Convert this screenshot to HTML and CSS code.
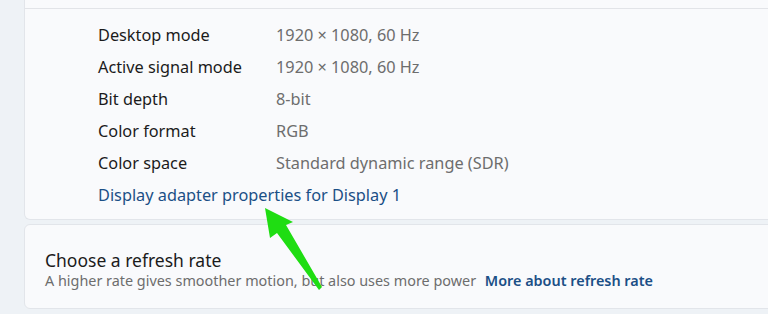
FILE: index.html
```html
<!DOCTYPE html>
<html lang="en">
<head>
    <meta charset="UTF-8">
    <title>Advanced display</title>
    <link rel="stylesheet" href="styles.css">
</head>
<body>
    <div class="page">
        <div class="card info-card">
            <div class="card-top"></div>
            <div class="info-list">
                <div class="info-row">
                    <span class="info-label">Desktop mode</span>
                    <span class="info-value">1920 × 1080, 60 Hz</span>
                </div>
                <div class="info-row">
                    <span class="info-label">Active signal mode</span>
                    <span class="info-value">1920 × 1080, 60 Hz</span>
                </div>
                <div class="info-row">
                    <span class="info-label">Bit depth</span>
                    <span class="info-value">8-bit</span>
                </div>
                <div class="info-row">
                    <span class="info-label">Color format</span>
                    <span class="info-value">RGB</span>
                </div>
                <div class="info-row">
                    <span class="info-label">Color space</span>
                    <span class="info-value">Standard dynamic range (SDR)</span>
                </div>
                <div class="info-row">
                    <a class="adapter-link" href="#">Display adapter properties for Display 1</a>
                </div>
            </div>
        </div>

        <div class="card refresh-card">
            <div class="refresh-title">Choose a refresh rate</div>
            <div class="refresh-desc">
                A higher rate gives smoother motion, but also uses more power
                <a class="more-link" href="#">More about refresh rate</a>
            </div>
        </div>
    </div>

    <!-- annotation arrow -->
    <svg class="arrow" width="80" height="100" viewBox="0 0 80 100">
        <polygon points="5,8 33,22 26,25 62,87 59,90 17,33 10,38" fill="#1fdd12"/>
    </svg>
</body>
</html>
```

FILE: styles.css
```css
/* Basic Reset */
* {
    margin: 0;
    padding: 0;
    box-sizing: border-box;
}

body {
    background-color: #eef2f6;
    font-family: "Noto Sans", "Open Sans", sans-serif;
    overflow: hidden;
    position: relative;
    width: 768px;
    height: 314px;
}

/* Page column */
.page {
    display: flex;
    flex-direction: column;
    gap: 4px;
    margin-left: 24px;
    margin-right: -20px;
}

/* Cards */
.card {
    background-color: #f9fafc;
    border: 1px solid #e2e5ea;
    border-radius: 6px;
}

.info-card {
    border-top: none;
    border-radius: 0 0 6px 6px;
    padding-bottom: 8px;
}

.card-top {
    height: 9px;
    border-bottom: 1px solid #e2e4e8;
}

/* Info rows */
.info-list {
    padding: 10px 0 0 73px;
}

.info-row {
    display: flex;
    align-items: center;
    height: 32px;
    font-size: 16.3px;
}

.info-label {
    width: 178px;
    color: #1b1b1b;
}

.info-value {
    color: #6d6d6d;
}

.adapter-link {
    color: #1b4f86;
    text-decoration: none;
}

/* Refresh rate card */
.refresh-card {
    height: 85px;
    padding: 24px 20px 0 20px;
}

.refresh-title {
    font-size: 17.5px;
    color: #1b1b1b;
    line-height: 22px;
}

.refresh-desc {
    font-size: 14.4px;
    color: #6d6d6d;
    line-height: 20px;
}

.more-link {
    color: #1b4f86;
    font-weight: 600;
    text-decoration: none;
    margin-left: 5px;
}

/* Annotation arrow over content */
.arrow {
    position: absolute;
    left: 260px;
    top: 200px;
}
```
